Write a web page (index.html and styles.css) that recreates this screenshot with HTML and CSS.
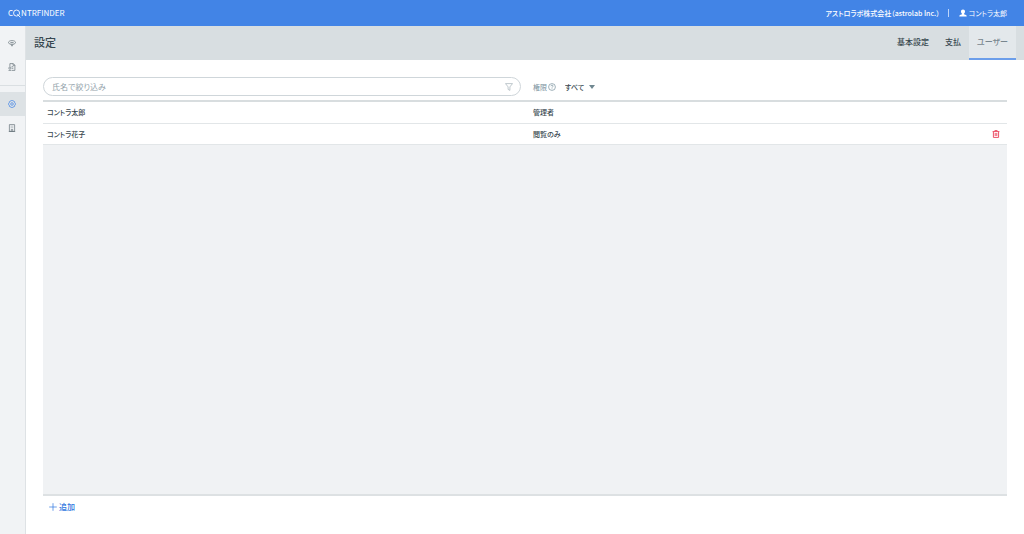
FILE: index.html
```html
<!DOCTYPE html>
<html lang="ja">
<head>
<meta charset="utf-8">
<title>設定 - CONTRFINDER</title>
<link rel="stylesheet" href="styles.css">
</head>
<body>
<header class="topbar">
  <a class="logo" href="#" aria-label="CONTRFINDER"><span>C</span><svg class="logo-o" viewBox="0 0 9 10" aria-hidden="true"><circle cx="4" cy="4.500" r="3.400"/><path d="M4.800 5.800 8.400 9.400"/></svg><span>NTRFINDER</span></a>
  <div class="account">
    <span class="company">アストロラボ株式会社（astrolab Inc.）</span>
    <span class="divider"></span>
    <a class="user" href="#"><svg class="user-icon" viewBox="0 0 8 8" aria-hidden="true"><path d="M4 .4c1.300 0 2 .9 2 2.100 0 1-.4 1.800-1 2.200v.6l2 .8q.7.300.7 1.500H.3q0-1.200.7-1.500l2-.8v-.6C2.400 4.300 2 3.500 2 2.500 2 1.300 2.700.4 4 .4z"/></svg>コントラ太郎</a>
  </div>
</header>
<div class="shell">
  <nav class="sidebar" aria-label="メイン">
    <a class="side-link" href="#" aria-label="検索"><svg viewBox="0 0 8 8"><path d="M3 5.200C1.500 5.100.5 4.400.5 3.500c0-1.100 1.500-1.900 3.500-1.900s3.500.8 3.500 1.900c0 .9-1 1.600-2.500 1.700M2.400 3.500h3.200M3 5.200l1 2 1-2z"/></svg></a>
    <a class="side-link" href="#" aria-label="契約書"><svg viewBox="0 0 8 8"><path d="M1.900 3.500V.6h3.400L6.900 2.200v5.200H3.600M5.100.7v1.700h1.700M3.600 3.700h1.700M3.900 5.300h1.400"/><circle cx="1.900" cy="5.100" r="1.100"/><path d="M.5 7.400h2.600"/></svg></a>
    <div class="side-rule"></div>
    <a class="side-link current" href="#" aria-label="設定"><svg viewBox="0 0 8 8"><path d="m3.300.5 1.400 0 .3.700.9-.2.900.9-.2.900.8.500v1.400l-.8.500.2.900-.9.900-.9-.2-.3.700H3.300L3 6.800l-.9.200-.9-.9.200-.9-.8-.500V3.300l.8-.500-.2-.9.900-.9.900.2z"/><circle cx="4" cy="4" r="1.300"/></svg></a>
    <a class="side-link" href="#" aria-label="会社"><svg viewBox="0 0 8 8"><path d="M1.400.6h5.200v6.800H1.400zM.8 7.500h6.400M3.300 7.400V5.500h1.400v1.900M2.800 2.200h.7M4.500 2.200h.7M2.800 3.700h.7M4.500 3.700h.7"/></svg></a>
  </nav>
  <main class="main">
    <div class="pagebar">
      <h1 class="title">設定</h1>
      <nav class="tabs" aria-label="設定">
        <a class="tab" href="#">基本設定</a>
        <a class="tab" href="#">支払</a>
        <a class="tab selected" href="#" aria-current="page">ユーザー</a>
      </nav>
    </div>
    <section class="content">
      <div class="filters">
        <label class="search">
          <input class="search-input" type="text" placeholder="氏名で絞り込み" aria-label="氏名で絞り込み">
          <svg class="funnel" viewBox="0 0 8 8" aria-hidden="true"><path d="M.5.600h7L4.900 3.900v3.500l-1.800-1V3.900z"/></svg>
        </label>
        <div class="role">
          <label class="role-label" for="role">権限</label>
          <svg class="help" viewBox="0 0 8 8" aria-hidden="true"><circle cx="4" cy="4" r="3.400"/><path d="M2.900 3.200Q3 2.200 4 2.200t1.100.9c0 .8-1.100.8-1.100 1.600M4 5.400v.7"/></svg>
          <span class="select-box">
            <select class="role-select" id="role"><option>すべて</option><option>管理者</option><option>閲覧のみ</option></select>
            <svg class="caret" viewBox="0 0 6 4" aria-hidden="true"><path d="M0 0h6L3 4z"/></svg>
          </span>
        </div>
      </div>
      <div class="list">
        <table class="users">
          <tbody>
            <tr><td>コントラ太郎</td><td>管理者</td><td class="action"></td></tr>
            <tr><td>コントラ花子</td><td>閲覧のみ</td><td class="action"><button class="delete" type="button" aria-label="削除"><svg viewBox="0 0 8 8" aria-hidden="true"><path d="M.6 1.600h6.800M2.800 1.500V.6h2.400v.9M1.400 1.700v5.700h5.200V1.700M3.200 3v3M4.800 3v3"/></svg></button></td></tr>
          </tbody>
        </table>
      </div>
      <button class="add" type="button"><svg viewBox="0 0 8 8" aria-hidden="true"><path d="M4 .2v7.600M.2 4h7.600"/></svg>追加</button>
    </section>
  </main>
</div>
</body>
</html>
```
FILE: styles.css
```css
* { box-sizing: border-box; }
body {
  margin: 0;
  min-height: 100vh;
  display: flex;
  flex-direction: column;
  background: #fff;
  color: #37474f;
  font: 500 8px/12px "Noto Sans CJK JP", sans-serif;
  font-feature-settings: "palt";
}
a { color: inherit; text-decoration: none; }
button, input, select { font: inherit; font-feature-settings: inherit; color: inherit; }
svg { display: block; flex: none; width: 8px; height: 8px; fill: none; stroke: currentColor; stroke-width: .7; }

.topbar {
  display: flex;
  align-items: center;
  justify-content: space-between;
  height: 26px;
  padding: 0 17px 0 8px;
  background: #4284e6;
  color: #fff;
}
.logo { display: flex; align-items: center; font-weight: 400; }
.logo-o { width: 8px; height: 9px; stroke-width: 1; }
.account { display: flex; align-items: center; font-size: 7px; }
.divider { width: 1px; height: 8px; margin: 0 10px 0 8px; background: #bdd5fa; }
.user { display: flex; align-items: center; gap: 2px; font-weight: 400; }
.user-icon { fill: #fff; stroke: none; }

.shell { flex: 1; display: flex; }
.sidebar { width: 26px; padding-top: 5px; background: #f1f3f5; border-right: 1px solid #dee2e5; color: #66727a; }
.side-link { display: flex; align-items: center; justify-content: center; height: 24px; padding-right: 1px; }
.side-rule { height: 1px; margin: 6px 0; background: #dadfe2; }
.current { background: #dde2e5; color: #4284e6; }

.main { flex: 1; display: flex; flex-direction: column; }
.pagebar { display: flex; align-items: center; justify-content: space-between; height: 34px; padding: 0 8px; background: #d8dee1; }
.title { margin: 0; padding-bottom: 2px; font-size: 11px; line-height: 16px; font-weight: 500; }
.tabs { display: flex; align-self: stretch; }
.tab { display: flex; align-items: center; padding: 0 8px; border-bottom: 2px solid transparent; }
.tab.selected { background: #e3e8eb; border-bottom-color: #6c9eea; color: #78868e; }

.content { flex: 1; display: flex; flex-direction: column; align-items: flex-start; padding: 17px 17px 20px; }
.filters { display: flex; align-items: center; width: 100%; gap: 12px; margin-bottom: 4px; }
.search { display: flex; align-items: center; flex: 0 1 calc(50% - 4px); height: 19px; padding: 0 7px 0 8px; border: 1px solid #cfd6da; border-radius: 10px; color: #a5b2b9; }
.search-input { flex: 1; min-width: 0; padding: 0; border: 0; outline: 0; background: none; font-weight: 400; color: #37474f; }
.search-input::placeholder { color: #93a3ab; }
.role { display: flex; align-items: center; color: #78909c; font-size: 7px; font-weight: 400; }
.help { margin: 0 9px 0 1px; }
.select-box { display: flex; align-items: center; color: #37474f; font-weight: 500; }
.role-select { appearance: none; width: 24px; padding: 0; border: 0; background: none; }
.caret { width: 6px; height: 4px; fill: #6f8790; stroke: none; }

.list { flex: 1; width: 100%; background: #f0f2f4; border-top: 2px solid #d8dddf; border-bottom: 2px solid #dde1e3; }
.users { width: 100%; border-collapse: collapse; table-layout: fixed; background: #fff; font-size: 7px; }
.users td { height: 21px; padding: 0 4px; border-bottom: 1px solid #e2e6e8; }
.users td:first-child { width: 50%; }
.users td:nth-child(2) { padding-left: 8px; }
.users .action { width: 22px; padding: 0 7px; }
.delete { display: block; padding: 0; border: 0; background: none; color: #ec5267; }
.delete svg { stroke-width: 1; }
.add { display: flex; align-items: center; gap: 2px; margin: 5px 0 1px 6px; padding: 0; border: 0; background: none; color: #2f77e0; }
```
